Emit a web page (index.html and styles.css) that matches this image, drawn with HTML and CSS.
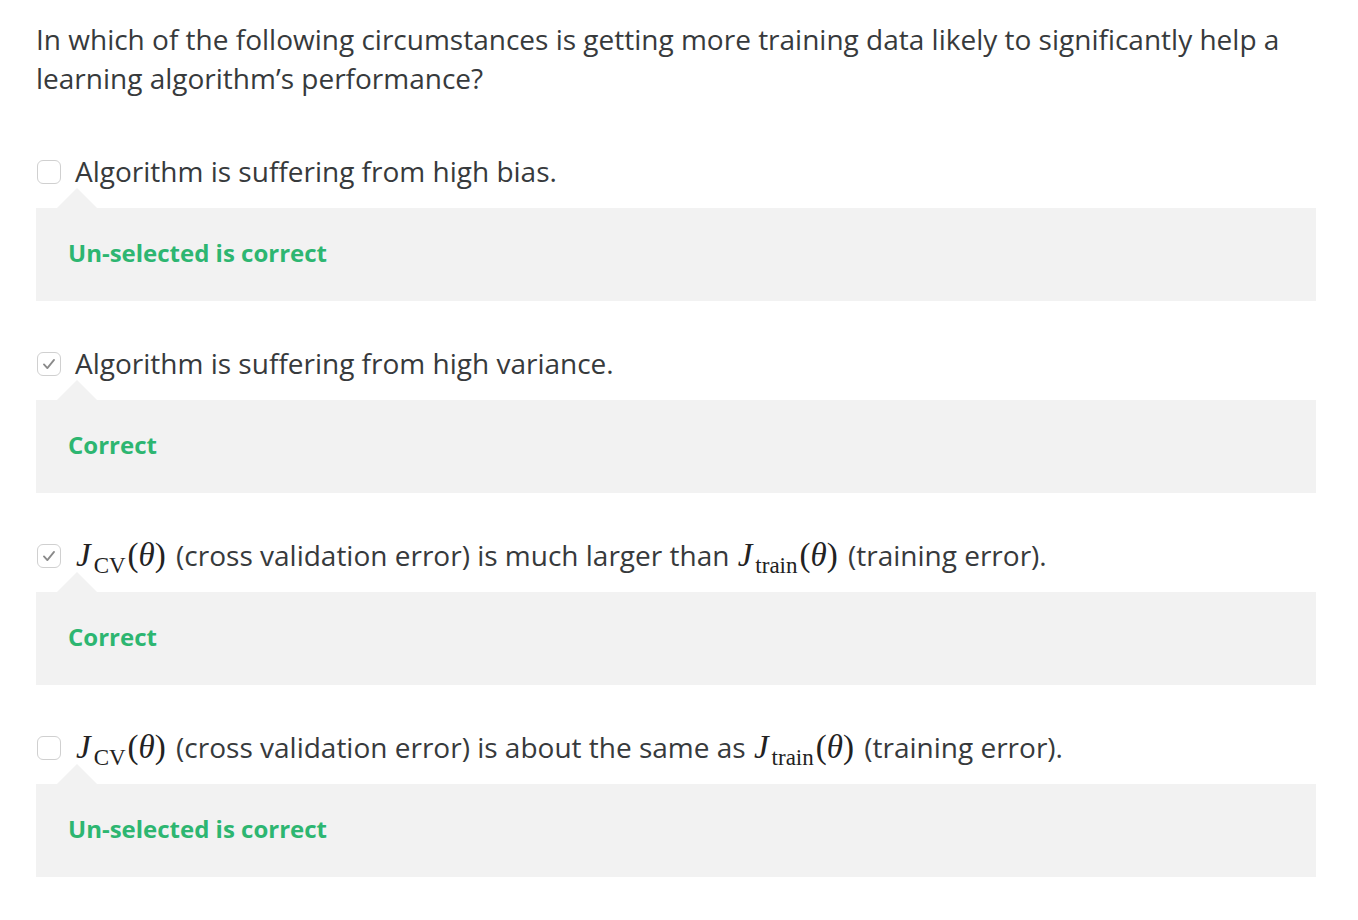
FILE: index.html
```html
<!DOCTYPE html>
<html>
<head>
<meta charset="utf-8">
<link rel="stylesheet" href="styles.css">
</head>
<body>
<div class="quiz">
  <p class="question">In which of the following circumstances is getting more training data likely to significantly help a learning algorithm’s performance?</p>

  <div class="item">
    <label class="option"><span class="box"></span><span class="label">Algorithm is suffering from high bias.</span></label>
    <div class="feedback"><span class="fb-text">Un-selected is correct</span></div>
  </div>

  <div class="item">
    <label class="option"><span class="box checked"><svg viewBox="0 0 24 24" width="24" height="24"><path d="M6.5 12.5 L10.2 16.5 L17.5 7.5" fill="none" stroke="#8a8a8a" stroke-width="2" stroke-linecap="round" stroke-linejoin="round"/></svg></span><span class="label">Algorithm is suffering from high variance.</span></label>
    <div class="feedback"><span class="fb-text">Correct</span></div>
  </div>

  <div class="item">
    <label class="option"><span class="box checked"><svg viewBox="0 0 24 24" width="24" height="24"><path d="M6.5 12.5 L10.2 16.5 L17.5 7.5" fill="none" stroke="#8a8a8a" stroke-width="2" stroke-linecap="round" stroke-linejoin="round"/></svg></span><span class="label"><span class="math"><i class="j">J</i><sub>CV</sub><span class="p">(</span><i>θ</i>)</span> (cross validation error) is much larger than <span class="math"><i class="j">J</i><sub>train</sub><span class="p">(</span><i>θ</i>)</span> (training error).</span></label>
    <div class="feedback"><span class="fb-text">Correct</span></div>
  </div>

  <div class="item">
    <label class="option"><span class="box"></span><span class="label"><span class="math"><i class="j">J</i><sub>CV</sub><span class="p">(</span><i>θ</i>)</span> (cross validation error) is about the same as <span class="math"><i class="j">J</i><sub>train</sub><span class="p">(</span><i>θ</i>)</span> (training error).</span></label>
    <div class="feedback"><span class="fb-text">Un-selected is correct</span></div>
  </div>
</div>
</body>
</html>
```
FILE: styles.css
```css
html, body {
  margin: 0;
  padding: 0;
  background: #ffffff;
}
body {
  font-family: "Open Sans", "Liberation Sans", sans-serif;
  color: #373a3c;
}
.quiz {
  padding: 20px 42px 0 36px;
}
.question {
  margin: 0 0 54px 0;
  font-size: 28px;
  line-height: 39px;
}
.item {
  margin-bottom: 43px;
}
.option {
  display: flex;
  align-items: center;
  height: 39px;
  font-size: 28px;
  line-height: 39px;
}
.box {
  box-sizing: border-box;
  width: 24px;
  height: 24px;
  margin-left: 1px;
  margin-right: 14px;
  border: 1px solid #d0d0d0;
  border-radius: 6px;
  background: #fff;
  display: flex;
  align-items: center;
  justify-content: center;
  flex: none;
}
.box svg {
  display: block;
  width: 22px;
  height: 22px;
}
.label {
  white-space: nowrap;
}
.math {
  font-family: "Liberation Serif", "Times New Roman", serif;
  font-size: 33px;
  color: #222;
  margin-right: 3px;
}
.math i {
  font-style: italic;
}
.math .j {
  margin-left: 1px;
  margin-right: 3px;
}
.math .p {
  margin-left: 2px;
}
.math sub {
  font-size: 23px;
  vertical-align: -7px;
  line-height: 0;
}
.feedback {
  position: relative;
  margin-top: 17px;
  background: #f2f2f2;
  height: 93px;
  padding: 0 32px 3px;
  box-sizing: border-box;
  display: flex;
  align-items: center;
}
.feedback::before {
  content: "";
  position: absolute;
  left: 21px;
  top: -20px;
  width: 0;
  height: 0;
  border-left: 20px solid transparent;
  border-right: 20px solid transparent;
  border-bottom: 20px solid #f2f2f2;
}
.fb-text {
  color: #2db671;
  font-weight: 700;
  font-size: 24px;
  line-height: 30px;
}
```
